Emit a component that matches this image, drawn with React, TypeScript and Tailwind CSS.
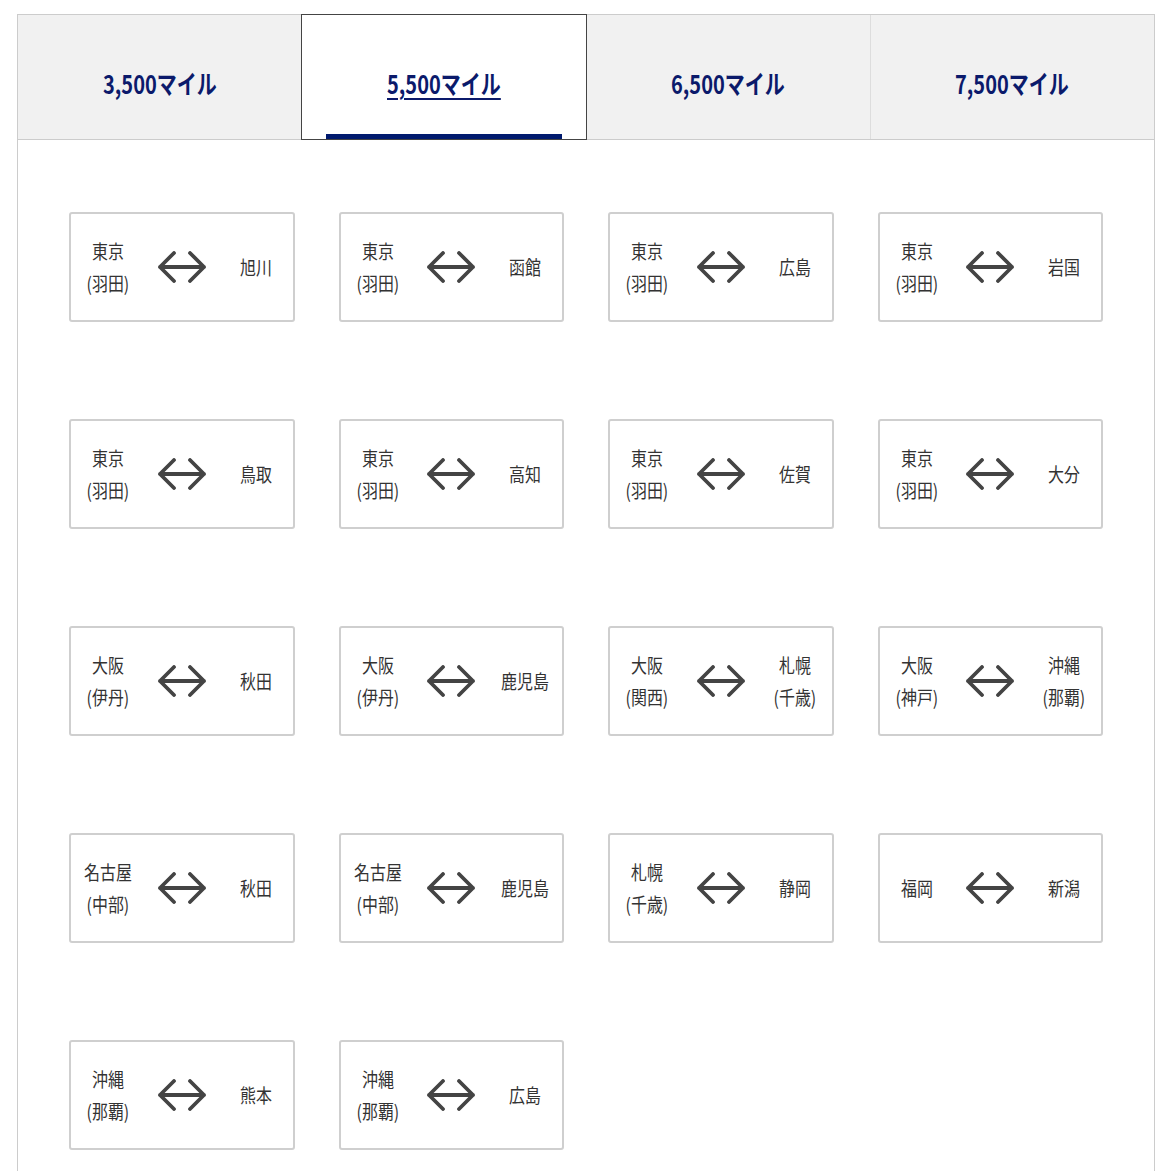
import React from 'react'

const tabs = ['3,500マイル', '5,500マイル', '6,500マイル', '7,500マイル']

type Route = { from: string[]; to: string[] }

const routes: Route[] = [
  { from: ['東京', '(羽田)'], to: ['旭川'] },
  { from: ['東京', '(羽田)'], to: ['函館'] },
  { from: ['東京', '(羽田)'], to: ['広島'] },
  { from: ['東京', '(羽田)'], to: ['岩国'] },
  { from: ['東京', '(羽田)'], to: ['鳥取'] },
  { from: ['東京', '(羽田)'], to: ['高知'] },
  { from: ['東京', '(羽田)'], to: ['佐賀'] },
  { from: ['東京', '(羽田)'], to: ['大分'] },
  { from: ['大阪', '(伊丹)'], to: ['秋田'] },
  { from: ['大阪', '(伊丹)'], to: ['鹿児島'] },
  { from: ['大阪', '(関西)'], to: ['札幌', '(千歳)'] },
  { from: ['大阪', '(神戸)'], to: ['沖縄', '(那覇)'] },
  { from: ['名古屋', '(中部)'], to: ['秋田'] },
  { from: ['名古屋', '(中部)'], to: ['鹿児島'] },
  { from: ['札幌', '(千歳)'], to: ['静岡'] },
  { from: ['福岡'], to: ['新潟'] },
  { from: ['沖縄', '(那覇)'], to: ['熊本'] },
  { from: ['沖縄', '(那覇)'], to: ['広島'] },
]

const font = { fontFamily: '"Noto Sans CJK JP", "Noto Sans", sans-serif' }

function Arrow() {
  return (
    <svg width="50" height="32" viewBox="0 0 50 32" fill="none" className="mx-auto">
      <path
        d="M3 16 H47 M17 2 L3 16 L17 30 M33 2 L47 16 L33 30"
        stroke="#444"
        strokeWidth="3.8"
        strokeLinecap="round"
        strokeLinejoin="round"
      />
    </svg>
  )
}

function Place({ lines }: { lines: string[] }) {
  return (
    <div className="flex flex-col items-center text-[19px] leading-[32px] text-[#333] scale-x-[0.84]">
      {lines.map((l) => (
        <span key={l} className="whitespace-nowrap">
          {l}
        </span>
      ))}
    </div>
  )
}

function RouteCard({ route }: { route: Route }) {
  return (
    <div className="h-[110px] border-2 border-[#cfcfcf] rounded-[3px] bg-white grid grid-cols-3 items-center text-center">
      <Place lines={route.from} />
      <Arrow />
      <Place lines={route.to} />
    </div>
  )
}

export default function App() {
  return (
    <div className="bg-white min-h-[1171px] pt-[14px] pl-[17px] pr-[16px]" style={font}>
      <div className="border-l border-r border-t border-[#cccccc] min-h-[1157px]">
        {/* Tabs */}
        <div className="flex h-[125px] border-b border-[#cccccc]">
          {tabs.map((t, i) => {
            const active = i === 1
            return (
              <div
                key={t}
                className={`relative flex-1 flex items-center justify-center pt-[10px] ${
                  active
                    ? 'bg-white border border-[#444] -mb-px -mt-px'
                    : `bg-[#f1f1f1] ${i > 0 && i !== 2 ? 'border-l border-[#dddddd]' : ''}`
                }`}
              >
                <span
                  className={`text-[26px] font-bold text-[#0b1a6b] scale-x-[0.77] whitespace-nowrap ${
                    active ? 'underline underline-offset-[4px] decoration-2' : ''
                  }`}
                >
                  {t}
                </span>
                {active && (
                  <div className="absolute left-[24px] right-[24px] bottom-0 h-[5px] bg-[#001a6e]" />
                )}
              </div>
            )
          })}
        </div>

        {/* Routes */}
        <div className="grid grid-cols-4 gap-x-[44px] gap-y-[97px] pt-[72px] px-[51px] pb-[20px]">
          {routes.map((r, i) => (
            <RouteCard key={i} route={r} />
          ))}
        </div>
      </div>
    </div>
  )
}
